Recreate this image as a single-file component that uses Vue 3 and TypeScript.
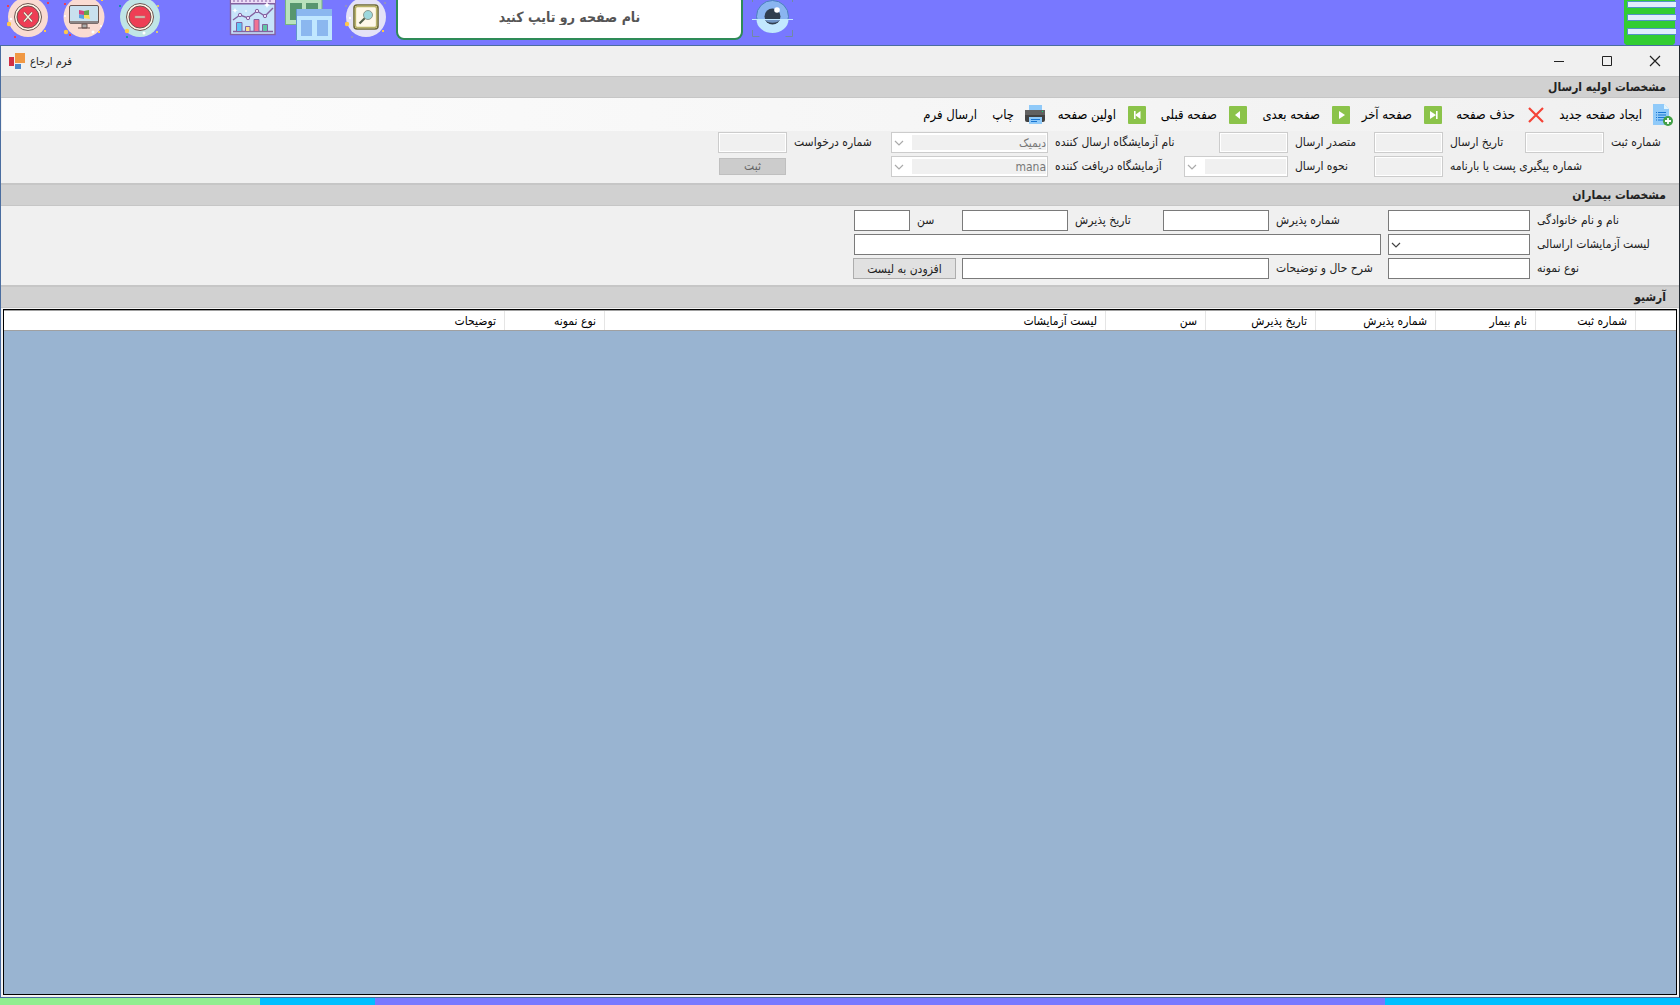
<script setup lang="ts">
import { ref } from 'vue'

interface Tool { text: string; icon: string; width: number }
interface Column { text: string; width: number | null }

const pageName = ref('')

const tools: Tool[] = [
  { text: 'ایجاد صفحه جدید', icon: 'new', width: 127 },
  { text: 'حذف صفحه', icon: 'delete', width: 103 },
  { text: 'صفحه آخر', icon: 'last', width: 92 },
  { text: 'صفحه بعدی', icon: 'next', width: 103 },
  { text: 'صفحه قبلی', icon: 'prev', width: 101 },
  { text: 'اولین صفحه', icon: 'first', width: 102 },
  { text: 'چاپ', icon: 'print', width: 69 },
  { text: 'ارسال فرم', icon: '', width: 60 },
]

const arrows: Record<string, string> = {
  last: 'M6 5l6 4-6 4zM12 5h1.6v8H12z',
  next: 'M7 5l6 4-6 4z',
  prev: 'M11 5l-5 4 5 4z',
  first: 'M12.5 5L7 9l5.500 4zM6 5h1.600v8H6z',
}

const columns: Column[] = [
  { text: '', width: 41 },
  { text: 'شماره ثبت', width: 100 },
  { text: 'نام بیمار', width: 100 },
  { text: 'شماره پذیرش', width: 120 },
  { text: 'تاریخ پذیرش', width: 110 },
  { text: 'سن', width: 100 },
  { text: 'لیست آزمایشات', width: 501 },
  { text: 'نوع نمونه', width: 100 },
  { text: 'توضیحات', width: null },
]
</script>

<template>
  <div class="screen">
    <header class="topbar">
      <button class="round" aria-label="بستن">
        <svg width="42" height="42" viewBox="7 0 42 42">
          <circle cx="28" cy="17" r="20" fill="#fadbd2" />
          <circle cx="28" cy="17" r="13.500" fill="#fff7e8" stroke="#6b5550" />
          <circle cx="28" cy="17" r="11" fill="#ee3e54" stroke="#6b5550" />
          <path d="M24 12.500l8 9M32 12.500l-8 9" stroke="#6b5550" stroke-width="2.600" />
          <path d="M24 12.500l8 9M32 12.500l-8 9" stroke="#fff2df" stroke-width="1.400" />
          <circle cx="9" cy="24" r="2.200" fill="#ffc84a" /><circle cx="11" cy="19" r="1.200" fill="#fff" />
          <path d="M7 5h2v2H7zM47 2h2v2h-2zM14 36h2v2h-2z" fill="#ee3e54" /><path d="M44 30h2v2h-2z" fill="#ffc84a" />
        </svg>
      </button>
      <button class="round" aria-label="دسکتاپ">
        <svg width="42" height="42" viewBox="63 0 42 42">
          <circle cx="84" cy="17" r="20.500" fill="#fadbd2" />
          <rect x="69.500" y="5.500" width="29" height="18" rx="1.500" fill="#c9e0ee" stroke="#6b5550" />
          <path d="M70 21h28v2.500H70z" fill="#8c8586" />
          <path d="M82 24h5v4h-5zM78 28h12" fill="#aaa" stroke="#6b5550" />
          <path d="M79 10l5 1v4l-5-.5z" fill="#d5457f" /><path d="M84 11l5-1v5h-5z" fill="#65a84d" />
          <path d="M79 14.500l5 .5v4l-5-1z" fill="#59a0e0" /><path d="M84 15h5l1 4-6-1z" fill="#fce05a" />
          <circle cx="66" cy="32" r="2.200" fill="#ffc84a" /><circle cx="93" cy="32" r="1.500" fill="#fff" />
          <path d="M64 3h2v2h-2zM69 34h2v2h-2z" fill="#ee3e54" /><path d="M98 31h2v2h-2zM101 0h2v1h-2z" fill="#ffc84a" />
          <circle cx="65" cy="16" r="1" fill="#fff" /><circle cx="101" cy="26" r="1" fill="#fff" />
        </svg>
      </button>
      <button class="round" aria-label="کوچک کردن">
        <svg width="42" height="42" viewBox="119 0 42 42">
          <circle cx="140" cy="17" r="20" fill="#c0e5e6" />
          <circle cx="140" cy="17" r="13.500" fill="#fff7e8" stroke="#6b5550" />
          <circle cx="140" cy="17" r="11" fill="#ee3e54" stroke="#6b5550" />
          <rect x="135" y="16" width="10" height="2" fill="#d9c0b2" stroke="#a88a80" stroke-width=".5" />
          <circle cx="127" cy="31" r="2.200" fill="#ffc84a" /><circle cx="144" cy="33" r="1.500" fill="#fff" />
          <path d="M119 5h2v2h-2zM126 36h2v2h-2z" fill="#1a8fa8" /><path d="M157 5h2v2h-2zM156 31h2v2h-2z" fill="#d8c878" />
        </svg>
      </button>
      <button class="chart" aria-label="نمودار">
        <svg width="48" height="36" viewBox="229 0 48 36">
          <rect x="230.500" y="-4" width="44.500" height="38.500" fill="#c7e4fa" stroke="#8461a0" stroke-width="1.400" />
          <path d="M231 0h44v3h-44z" fill="#eddcf7" /><path d="M231 3.700h44" stroke="#8461a0" stroke-width="1.400" />
          <path d="M234 0v2m4-2v2m4-2v2m4-2v2m4-2v2m4-2v2m4-2v2m4-2v2m4-2v2m4-2v2" stroke="#8461a0" />
          <path d="M233 20l7-5 8 3 9-7 8 5 8-8" fill="none" stroke="#8461a0" stroke-width="1.400" />
          <g fill="#eddcf7" stroke="#8461a0"><circle cx="240" cy="15" r="1.700" /><circle cx="248" cy="18" r="1.700" /><circle cx="257" cy="11" r="1.700" /><circle cx="265" cy="16" r="1.700" /></g>
          <path d="M233 31.500h40" stroke="#8461a0" stroke-width="1.400" />
          <g stroke="#8461a0"><path d="M236.500 22.500h5.500v9h-5.500z" fill="#60c5f5" /><path d="M245.500 26.500h4.500v5h-4.500z" fill="#ffe08a" /><path d="M254 19.500h5v12h-5z" fill="#f27392" /><path d="M262.500 24.500h5v7h-5z" fill="#61c5a6" /></g>
          <path d="M235 8l1 2 2 0-2 1-1 2-1-2-2-1 2 0zM246 10l1 1-1 1-1-1zM267 2l1 2 2 1-2 1-1 2-1-2-2-1 2-1z" fill="#fff" />
        </svg>
      </button>
      <button class="wins" aria-label="پنجره ها">
        <svg width="49" height="42" viewBox="284 0 49 42">
          <rect x="285.500" y="-3" width="36.500" height="27.500" fill="#b9e2bd" stroke="#76b383" />
          <path d="M290 3h12v17h-12zM306 3h12v17h-12z" fill="#57966f" />
          <path d="M296 9h36v32h-36z" fill="#c0e7ff" /><path d="M296 9h36v7h-36z" fill="#8bb7ef" />
          <path d="M301 20h11v16h-11zM317 20h11v16h-11z" fill="#8bb7ef" /><path d="M296.500 9v31.500H332" fill="none" stroke="#6195cc" />
        </svg>
      </button>
      <button class="lens" aria-label="جستجو">
        <svg width="42" height="42" viewBox="345 0 42 42">
          <circle cx="366" cy="17" r="20" fill="#e4e2f7" />
          <rect x="354" y="5" width="24" height="24" rx="3" fill="#fff8e9" stroke="#6f6b36" stroke-width="1.600" />
          <rect x="355.500" y="6.500" width="21" height="21" rx="2" fill="none" stroke="#b9b267" stroke-width="1.300" />
          <path d="M365 18l-5.500 5.500" stroke="#55604b" stroke-width="2.200" />
          <circle cx="368" cy="15" r="4.500" fill="#9dd7dc" stroke="#8f9a90" />
          <circle cx="347" cy="24" r="2.200" fill="#ffc84a" /><circle cx="350" cy="18" r="1.200" fill="#fff" />
          <path d="M345 5h2v2h-2zM351 36h2v2h-2zM384 2h2v2h-2z" fill="#9191c2" /><path d="M382 30h2v2h-2z" fill="#ffc84a" />
        </svg>
      </button>
      <input v-model="pageName" class="search" type="text" aria-label="نام صفحه" placeholder="نام صفحه رو تایپ کنید" />
      <button class="eye" aria-label="نمایش">
        <svg width="43" height="38" viewBox="751 0 43 38">
          <circle cx="772.500" cy="16.500" r="16" fill="#8ab5f0" stroke="#4b80bd" />
          <path d="M756.500 19.500a16 13.500 0 0 0 32 0z" fill="#c2e8ff" />
          <circle cx="772.500" cy="16.500" r="8" fill="#303e4e" /><path d="M765 19.500a8 5 0 0 0 15 0z" fill="#6f94c4" />
          <circle cx="777" cy="10" r="2.800" fill="#fff" /><path d="M752 19.500h41" stroke="#c2e8ff" />
          <path d="M752.500 30v6.500h7M792.500 30v6.500h-7M752.500 0v2M792.500 0v2" fill="none" stroke="#718aa2" />
        </svg>
      </button>
      <button class="menu" aria-label="منو">
        <svg width="52" height="45" viewBox="0 0 52 45">
          <path d="M0 0h51v43l-2 2H2l-2-2z" fill="#32cd32" />
          <g fill="#e1edfc" stroke="#5293c4"><path d="M52 1.500H3.500v6H52M52 14.500H3.500v6H52M52 28.500H3.500v6H52" /></g>
        </svg>
      </button>
    </header>

    <main class="window" dir="rtl">
      <div class="titlebar" dir="ltr">
        <svg width="16" height="16" viewBox="0 0 16 16">
          <path d="M6 0h10v10H6z" fill="#f09843" /><path d="M0 4h5v9H0z" fill="#d12f43" /><path d="M6 11h6v5H6z" fill="#4a86c8" />
        </svg>
        <h1>فرم ارجاع</h1>
        <div class="controls">
          <button aria-label="کوچک"><svg width="12" height="12" viewBox="0 0 12 12"><path d="M1 6.500h10" stroke="#222" /></svg></button>
          <button aria-label="بزرگ"><svg width="12" height="12" viewBox="0 0 12 12"><path d="M1.500 1.500h9v9h-9z" fill="none" stroke="#222" /></svg></button>
          <button aria-label="خروج"><svg width="12" height="12" viewBox="0 0 12 12"><path d="M1 1l10 10M11 1L1 11" stroke="#222" stroke-width="1.200" /></svg></button>
        </div>
      </div>

      <section>
        <h2 class="first"><span>مشخصات اولیه ارسال</span></h2>
        <div class="toolbar">
          <button v-for="t in tools" :key="t.text" class="tool" :style="{ width: t.width + 'px' }">
            <svg v-if="t.icon === 'new'" width="22" height="22" viewBox="0 0 22 22">
              <path d="M1 0h11l5 5v16H1z" fill="#90caf9" /><path d="M12 0v5h5z" fill="#e1f5fe" />
              <path d="M4 8.500h1m1 0h8M4 11h1m1 0h8M4 13.500h1m1 0h8M4 16h1m1 0h6" stroke="#1976d2" stroke-width="1.200" />
              <circle cx="16" cy="17" r="5" fill="#43a047" /><path d="M16 14v6M13 17h6" stroke="#fff" stroke-width="1.800" />
            </svg>
            <svg v-else-if="t.icon === 'delete'" width="22" height="22" viewBox="0 0 22 22"><path d="M4 4l14 14M18 4L4 18" stroke="#f44336" stroke-width="2.200" /></svg>
            <svg v-else-if="t.icon === 'print'" width="22" height="22" viewBox="0 0 22 22">
              <path d="M5 1h13v6H5z" fill="#90caf9" /><rect x="1" y="6" width="20" height="12" rx="2" fill="#424242" />
              <path d="M1 6h20v5H1z" fill="#616161" /><path d="M5 13h13v7H5z" fill="#90caf9" /><path d="M7 15.500h9M7 17.500h6" stroke="#1976d2" /><path d="M18 7h1v1h-1z" fill="#00e676" />
            </svg>
            <svg v-else-if="t.icon" class="arrow" width="18" height="18" viewBox="0 0 18 18">
              <rect width="18" height="18" rx="1" fill="#8bc34a" /><path :d="arrows[t.icon]" fill="#fff" />
            </svg>
            <span>{{ t.text }}</span>
          </button>
        </div>
        <div class="fields sending">
          <div class="row a">
            <label for="reg">شماره ثبت</label><input id="reg" disabled />
            <label for="sdate">تاریخ ارسال</label><input id="sdate" disabled />
            <label for="sender">متصدر ارسال</label><input id="sender" disabled />
            <label for="slab">نام آزمایشگاه ارسال کننده</label>
            <div class="combo"><select id="slab" disabled><option>دیمیک</option></select><svg width="10" height="6" viewBox="0 0 10 6"><path d="M1 1l4 4 4-4" /></svg></div>
            <label for="req">شماره درخواست</label><input id="req" disabled />
          </div>
          <div class="row b">
            <label for="track">شماره پیگیری پست یا بارنامه</label><input id="track" disabled />
            <label for="how">نحوه ارسال</label>
            <div class="combo"><select id="how" disabled><option></option></select><svg width="10" height="6" viewBox="0 0 10 6"><path d="M1 1l4 4 4-4" /></svg></div>
            <label for="rlab">آزمایشگاه دریافت کننده</label>
            <div class="combo"><select id="rlab" disabled><option>mana</option></select><svg width="10" height="6" viewBox="0 0 10 6"><path d="M1 1l4 4 4-4" /></svg></div>
            <span></span><button class="save" disabled>ثبت</button>
          </div>
        </div>
      </section>

      <section>
        <h2><span>مشخصات بیماران</span></h2>
        <div class="fields patients">
          <div class="row c">
            <label for="name">نام و نام خانوادگی</label><input id="name" />
            <label for="adm">شماره پذیرش</label><input id="adm" />
            <label for="adate">تاریخ پذیرش</label><input id="adate" />
            <label for="age">سن</label><input id="age" />
          </div>
          <div class="row d">
            <label for="tests">لیست آزمایشات اراسالی</label>
            <div class="combo"><select id="tests"><option></option></select><svg width="10" height="6" viewBox="0 0 10 6"><path d="M1 1l4 4 4-4" /></svg></div>
            <span></span><input aria-label="آزمایشات" />
          </div>
          <div class="row e">
            <label for="kind">نوع نمونه</label><input id="kind" />
            <label for="notes">شرح حال و توضیحات</label><input id="notes" />
            <span></span><button class="add">افزودن به لیست</button>
          </div>
        </div>
      </section>

      <section class="archive">
        <h2><span>آرشیو</span></h2>
        <div class="list">
          <table>
            <colgroup><col v-for="(c, i) in columns" :key="i" :style="c.width ? { width: c.width + 'px' } : {}" /></colgroup>
            <thead><tr><th v-for="(c, i) in columns" :key="i" scope="col">{{ c.text }}</th></tr></thead>
          </table>
        </div>
      </section>
    </main>
    <footer class="strip"><i class="green"></i><i class="sky"></i><i class="violet"></i><i class="sky wide"></i></footer>
  </div>
</template>

<style>
body { margin: 0; background: #7878ff; }
</style>

<style scoped>
.screen { display: flex; flex-direction: column; min-height: 100vh; font-family: "DejaVu Sans Condensed", "DejaVu Sans", sans-serif; font-size: 12px; color: #222; background: #7878ff; }
.screen * { box-sizing: border-box; }
button, input, select { font: inherit; color: inherit; margin: 0; }
button { border: 0; padding: 0; background: none; }
svg { display: block; flex: none; }
.topbar { display: flex; align-items: flex-start; height: 45px; padding: 0 4px 0 7px; overflow: hidden; }
.round { margin-right: 14px; }
.chart { margin-left: 54px; }
.wins { margin-left: 7px; }
.lens { margin-left: 12px; }
.search { width: 347px; height: 47px; margin: -7px 8px 0 9px; border: 2px solid #2e8b57; border-radius: 8px; background: #fff; text-align: center; direction: rtl; font-size: 14px; font-weight: bold; padding: 0; }
.search::placeholder { color: #555; opacity: 1; }
.menu { margin-left: auto; }
.window { flex: 1; display: flex; flex-direction: column; border: 1px solid #4a6da0; border-right-color: #202830; background: #f0f0f0; }
.titlebar { display: flex; align-items: center; height: 30px; padding-left: 8px; gap: 5px; }
h1 { margin: 0; font-size: 11px; font-weight: normal; }
.controls { display: flex; margin-left: auto; }
.controls button { width: 48px; height: 30px; display: grid; place-items: center; }
h2 { display: flex; align-items: center; height: 23px; margin: 0; padding: 0 13px 0 0; border-top: 2px solid #c6c6c6; border-bottom: 1px solid #c6c6c6; background: #d1d1d1; font-size: 12px; line-height: 16px; }
.first { height: 22px; border-top-width: 1px; }
.toolbar { display: flex; align-items: center; height: 33px; margin: 0 1px; padding-right: 4px; background: linear-gradient(to left, #f0f0f0, #fdfdfd); color: #000; font-size: 13px; }
.tool { display: flex; align-items: center; gap: 10px; white-space: nowrap; flex: none; }
.arrow { margin: 0 2px; }
.fields { display: flex; flex-direction: column; gap: 3px; padding-right: 1px; }
.sending { height: 52px; padding-top: 1px; }
.patients { height: 79px; padding-top: 4px; }
.row { display: grid; height: 21px; align-items: center; }
.a { grid-template-columns: 74px 79px 82px 69px 86px 69px 171px 157px 104px 69px; }
.b { grid-template-columns: 235px 69px 86px 104px 136px 157px 105px 67px; }
.c { grid-template-columns: 148px 142px 119px 106px 95px 106px 52px 56px; }
.d { grid-template-columns: 148px 142px 7px 527px; }
.e { grid-template-columns: 148px 142px 119px 307px 6px 103px; }
label { padding: 0 0 2px 7px; text-align: left; white-space: nowrap; line-height: 16px; }
input, select { width: 100%; height: 21px; border: 1px solid #7a7a7a; border-radius: 0; background: #fff; padding: 0 3px; outline: 0; appearance: none; }
input:disabled { border-color: #ccc; background: #f0f0f0; box-shadow: inset 0 0 0 1px #fff; }
.combo { position: relative; }
.combo svg { position: absolute; left: 3px; top: 8px; fill: none; stroke: #444; stroke-width: 1.2; }
select { display: block; }
select:disabled { padding: 0 1px; border-color: #ccc; color: #777; opacity: 1; background: linear-gradient(#f0f0f0, #f0f0f0) no-repeat right 1px top 2px / calc(100% - 21px) 15px #fff; }
select:disabled + svg { stroke: #aaa; }
.save { height: 17px; border: 1px solid #bfbfbf; background: #ccc; color: #666; line-height: 15px; }
.add { height: 21px; border: 1px solid #adadad; background: #e1e1e1; }
.archive { flex: 1; display: flex; flex-direction: column; }
.list { flex: 1; margin: 1px 2px 2px; border: 1px solid #000; box-shadow: 0 0 0 1px #f5f5f5; background: #99b4d1; }
table { width: 100%; table-layout: fixed; border-collapse: separate; border-spacing: 0; background: #fff; border-top: 1px solid #a0a0a0; border-bottom: 1px solid #a0a0a0; color: #000; }
th { height: 19px; padding: 0 8px 0 0; border-left: 1px solid #e5e5e5; text-align: right; font-weight: normal; line-height: 16px; }
th:last-child { border-left: 0; }
.strip { display: flex; height: 7px; }
.strip i { width: 260px; }
.strip .green { background: #90ee90; }
.strip .sky { width: 115px; background: #00bfff; }
.strip .violet { flex: 1; background: #7878ff; }
.strip .wide { width: 295px; }
</style>
